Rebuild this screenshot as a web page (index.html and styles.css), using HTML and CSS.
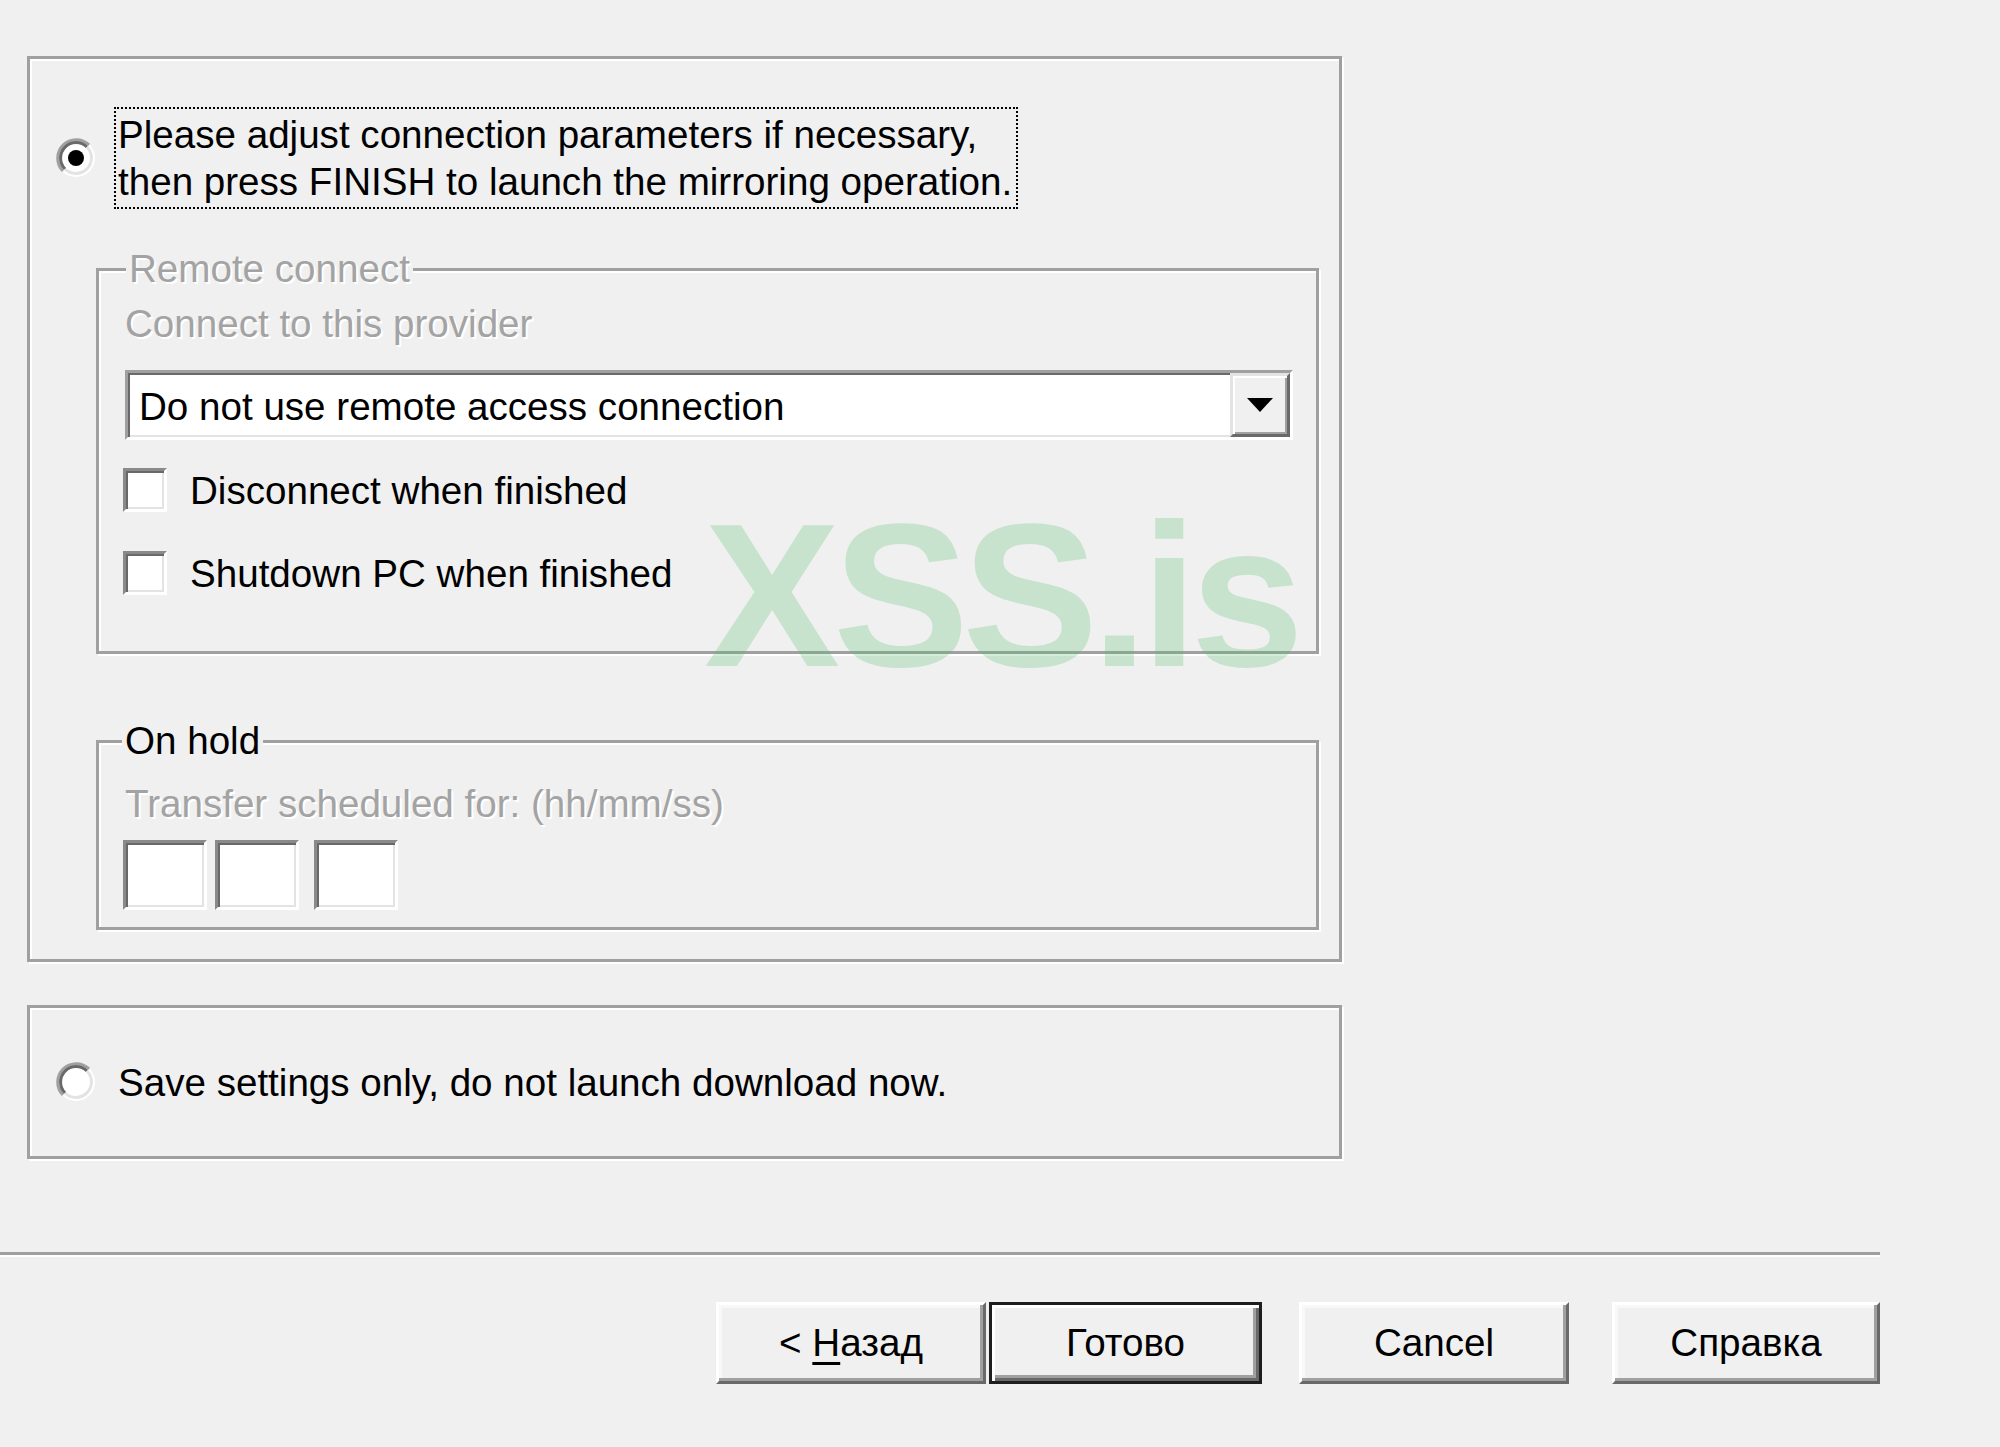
FILE: index.html
```html
<!DOCTYPE html>
<html lang="en">
<head>
<meta charset="utf-8">
<title>Mirroring options</title>
<link rel="stylesheet" href="styles.css">
</head>
<body>
<div class="page">
  <div class="panel panel-main">
    <div class="opt">
      <svg class="radio" width="40" height="40" viewBox="0 0 40 40">
        <circle cx="20" cy="20" r="19" fill="#fff"/>
        <path d="M6.92 33.08 A18.5 18.5 0 0 1 33.08 6.92" fill="none" stroke="#a0a0a0" stroke-width="3"/>
        <path d="M9.04 30.96 A15.5 15.5 0 0 1 30.96 9.04" fill="none" stroke="#696969" stroke-width="3"/>
        <path d="M30.96 9.04 A15.5 15.5 0 0 1 9.04 30.96" fill="none" stroke="#e3e3e3" stroke-width="3"/>
        <circle cx="20" cy="20" r="8" fill="#000"/>
      </svg>
      <label class="opt-label focus">Please adjust connection parameters if necessary,<br>then press FINISH to launch the mirroring operation.</label>
    </div>

    <fieldset class="grp grp-remote">
      <legend class="legend-remote disabled">Remote connect</legend>
      <div class="line disabled">Connect to this provider</div>
      <div class="combo">
        <span class="combo-text">Do not use remote access connection</span>
        <span class="combo-btn"><span class="tri"></span></span>
      </div>
      <div class="chk-row chk-first"><span class="check"></span><span class="chk-label">Disconnect when finished</span></div>
      <div class="chk-row chk-second"><span class="check"></span><span class="chk-label">Shutdown PC when finished</span></div>
    </fieldset>

    <fieldset class="grp grp-hold">
      <legend class="legend-hold">On hold</legend>
      <div class="line disabled">Transfer scheduled for: (hh/mm/ss)</div>
      <div class="time-row">
        <span class="edit"></span>
        <span class="edit"></span>
        <span class="edit edit-last"></span>
      </div>
    </fieldset>
  </div>

  <div class="panel panel-save">
    <svg class="radio" width="40" height="40" viewBox="0 0 40 40">
      <circle cx="20" cy="20" r="19" fill="#fff"/>
      <path d="M6.92 33.08 A18.5 18.5 0 0 1 33.08 6.92" fill="none" stroke="#a0a0a0" stroke-width="3"/>
      <path d="M9.04 30.96 A15.5 15.5 0 0 1 30.96 9.04" fill="none" stroke="#696969" stroke-width="3"/>
      <path d="M30.96 9.04 A15.5 15.5 0 0 1 9.04 30.96" fill="none" stroke="#e3e3e3" stroke-width="3"/>
    </svg>
    <label class="opt-label">Save settings only, do not launch download now.</label>
  </div>

  <div class="sep"></div>

  <div class="buttons">
    <button class="btn btn-back">&lt; <u>Н</u>азад</button>
    <button class="btn btn-default">Готово</button>
    <button class="btn btn-cancel">Cancel</button>
    <button class="btn btn-help">Справка</button>
  </div>

  <div class="wm">XSS.is</div>
</div>
</body>
</html>
```

FILE: styles.css
```css
html, body {
  margin: 0;
  padding: 0;
  background: #f0f0f0;
}
body {
  width: 2000px;
  height: 1447px;
  overflow: hidden;
  font-family: "Liberation Sans", Arial, sans-serif;
  font-size: 38.6px;
  line-height: 46px;
  color: #000;
}
.page {
  position: relative;
  padding-top: 56px;
}

/* etched panels */
.panel {
  box-sizing: border-box;
  margin-left: 27px;
  width: 1315px;
  border: 3px solid #a0a0a0;
  box-shadow: inset 2px 2px 0 #fff, 2px 2px 0 #fff;
}
.panel-main {
  padding: 48px 20px 29px 0;
}
.panel-save {
  margin-top: 43px;
  height: 154px;
  display: flex;
  align-items: center;
}

.opt {
  display: flex;
  align-items: center;
}
.radio {
  flex: none;
  margin-left: 26px;
  margin-right: 18px;
}
.opt-label {
  display: block;
  border: 2px dotted transparent;
  padding: 2px 4px 2px 2px;
  line-height: 47px;
  white-space: nowrap;
}
.opt-label.focus {
  border-color: #000;
}

/* group boxes */
.grp {
  box-sizing: border-box;
  margin: 0 0 0 66px;
  width: 1223px;
  min-width: 0;
  border: 3px solid #a0a0a0;
  box-shadow: inset 2px 2px 0 #fff, 2px 2px 0 #fff;
  padding: 0 23px 0 26px;
}
.grp legend {
  background: #f0f0f0;
  padding: 0 3px;
  line-height: 46px;
  height: 46px;
}
.grp-remote {
  margin-top: 37px;
  padding-top: 9px;
  padding-bottom: 54px;
}
.legend-remote {
  margin-left: 1px;
}
.grp-hold {
  margin-top: 64px;
  padding-top: 17px;
  padding-bottom: 17px;
}
.legend-hold {
  margin-left: -3px;
}
.disabled {
  color: #a3a3a3;
  text-shadow: 2px 2px 0 #fff;
}
.line {
  white-space: nowrap;
}

/* combo box */
.combo {
  box-sizing: border-box;
  margin-top: 23px;
  height: 70px;
  display: flex;
  align-items: stretch;
  background: #fff;
  border: 3px solid;
  border-color: #a0a0a0 #fff #fff #a0a0a0;
  box-shadow: inset 2px 2px 0 #696969, inset -2px -2px 0 #e3e3e3;
}
.combo-text {
  flex: 1;
  padding-left: 11px;
  padding-top: 3px;
  display: flex;
  align-items: center;
  white-space: nowrap;
}
.combo-btn {
  box-sizing: border-box;
  flex: none;
  width: 60px;
  margin: 0;
  background: #f0f0f0;
  border: 3px solid;
  border-color: #e3e3e3 #696969 #696969 #e3e3e3;
  box-shadow: inset 2px 2px 0 #fff, inset -2px -2px 0 #a0a0a0;
  display: flex;
  align-items: center;
  justify-content: center;
}
.tri {
  width: 0;
  height: 0;
  border-left: 13px solid transparent;
  border-right: 13px solid transparent;
  border-top: 14px solid #000;
}

/* checkboxes */
.chk-row {
  display: flex;
  align-items: center;
  height: 46px;
}
.chk-first {
  margin-top: 28px;
}
.chk-second {
  margin-top: 37px;
}
.check {
  box-sizing: border-box;
  flex: none;
  width: 44px;
  height: 44px;
  margin-left: -2px;
  margin-top: -2px;
  background: #fff;
  border: 3px solid;
  border-color: #8a8a8a #fff #fff #8a8a8a;
  box-shadow: inset 2px 2px 0 #696969, inset -2px -2px 0 #e3e3e3;
}
.chk-label {
  margin-left: 23px;
  white-space: nowrap;
}

/* time edits */
.time-row {
  display: flex;
  gap: 8px;
  margin-top: 13px;
  margin-left: -2px;
}
.edit {
  box-sizing: border-box;
  width: 84px;
  height: 70px;
  background: #fff;
  border: 3px solid;
  border-color: #8a8a8a #fff #fff #8a8a8a;
  box-shadow: inset 2px 2px 0 #696969, inset -2px -2px 0 #e3e3e3;
}
.edit-last {
  margin-left: 7px;
}

/* separator */
.sep {
  margin-top: 93px;
  width: 1880px;
  height: 3px;
  background: #a0a0a0;
  border-bottom: 2px solid #fff;
}

/* buttons */
.buttons {
  display: flex;
  justify-content: flex-end;
  width: 1880px;
  margin-top: 45px;
}
.btn {
  box-sizing: border-box;
  height: 82px;
  padding: 0;
  margin: 0;
  font-family: "Liberation Sans", Arial, sans-serif;
  font-size: 38.6px;
  color: #000;
  background: #f0f0f0;
  border: 3px solid;
  border-color: #fff #696969 #696969 #fff;
  box-shadow: inset -3px -3px 0 #a0a0a0, inset 3px 3px 0 #f8f8f8;
}
.btn u {
  text-underline-offset: 6px;
  text-decoration-thickness: 3px;
}
.btn-back {
  width: 270px;
}
.btn-default {
  width: 273px;
  margin-left: 3px;
  border-color: #1e1e1e;
  box-shadow: inset 3px 3px 0 #fff, inset -3px -3px 0 #696969, inset -6px -6px 0 #a0a0a0;
}
.btn-cancel {
  width: 270px;
  margin-left: 37px;
}
.btn-help {
  width: 268px;
  margin-left: 43px;
}

/* watermark overlay */
.wm {
  position: absolute;
  left: 704px;
  top: 493px;
  font-family: "Liberation Sans", Arial, sans-serif;
  font-weight: bold;
  font-size: 204px;
  line-height: 1;
  letter-spacing: -7px;
  color: rgba(80, 190, 105, 0.26);
  pointer-events: none;
  white-space: nowrap;
}
```
